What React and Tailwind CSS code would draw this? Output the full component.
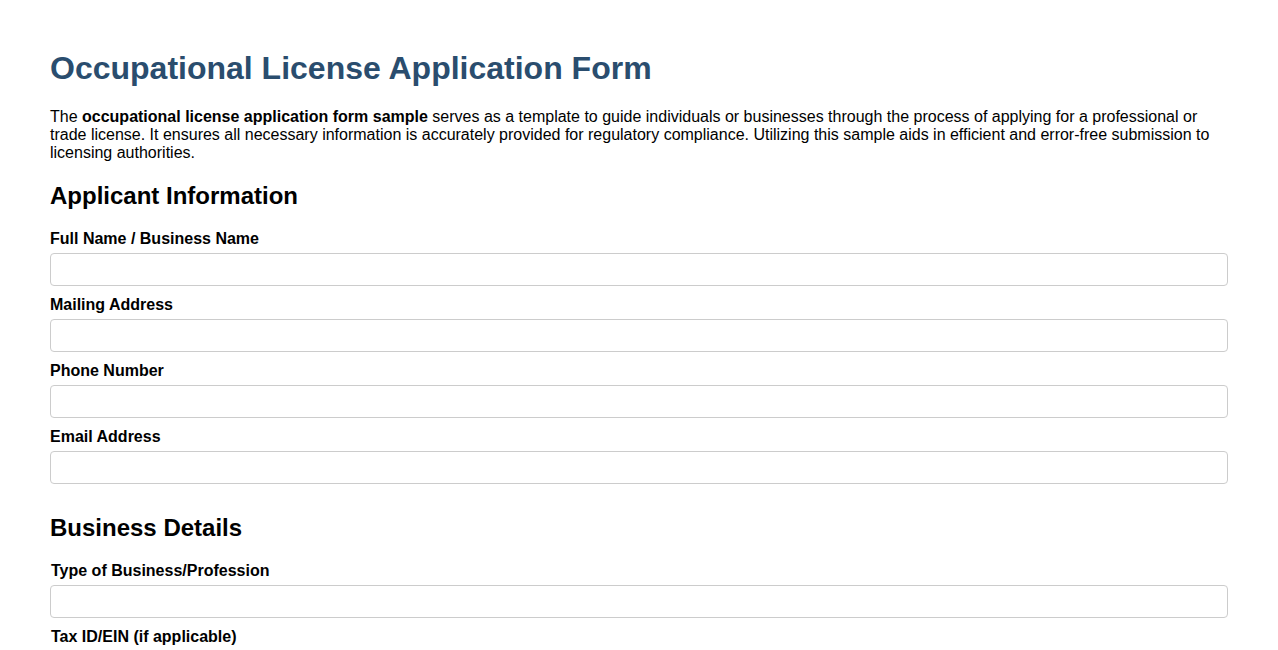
const applicant = ["Full Name / Business Name", "Mailing Address", "Phone Number", "Email Address"];
const business = ["Type of Business/Profession", "Tax ID/EIN (if applicable)"];

function Field({ label, indent }) {
  return (
    <div className="mb-2.5">
      <label className={`block mb-[5px] text-base font-bold leading-[18px] ${indent ? "pl-px" : ""}`}>{label}</label>
      <input type="text" className="block w-full h-[33px] border border-[#cccccc] rounded px-2 outline-none" />
    </div>
  );
}

export default function App() {
  return (
    <div className="min-h-screen bg-white text-black px-[50px] pt-[50px] pb-10 font-['Liberation_Sans',Arial,sans-serif]">
      <h1 className="text-[32px] font-bold leading-[37px] text-[#2a4d6e] mb-[21px]">Occupational License Application Form</h1>
      <p className="text-base leading-[18px] mb-5">
        The <strong>occupational license application form sample</strong> serves as a template to guide individuals or businesses through the process of applying for a professional or trade license. It ensures all necessary information is accurately provided for regulatory compliance. Utilizing this sample aids in efficient and error-free submission to licensing authorities.
      </p>

      <section>
        <h2 className="text-2xl font-bold leading-[28px] mb-5">Applicant Information</h2>
        {applicant.map(l => <Field key={l} label={l} />)}
      </section>

      <section className="mt-[30px]">
        <h2 className="text-2xl font-bold leading-[28px] mb-5">Business Details</h2>
        {business.map(l => <Field key={l} label={l} indent />)}
      </section>
    </div>
  );
}
